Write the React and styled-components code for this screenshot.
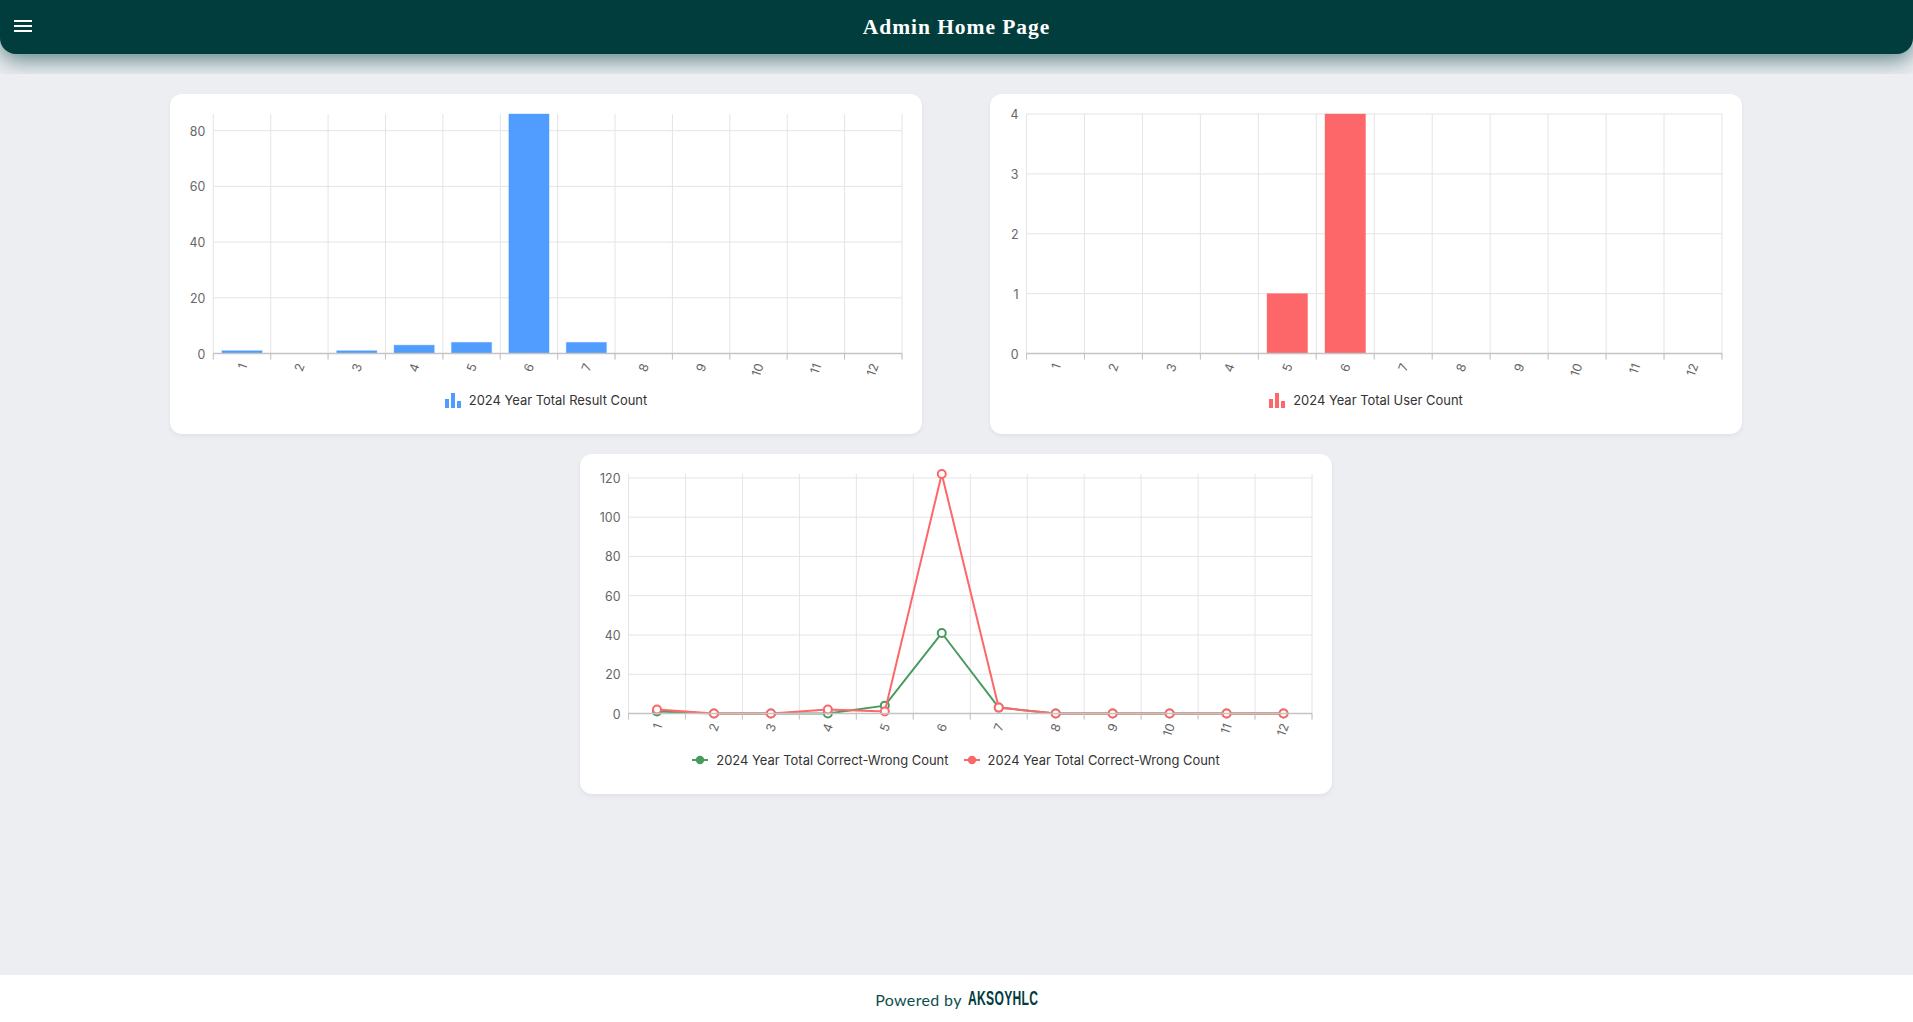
import React from "react";
import styled, { createGlobalStyle } from "styled-components";

const Global = createGlobalStyle`
  html, body { margin: 0; padding: 0; background: #eceef2; }
  #root { min-height: 100vh; }
`;

const Page = styled.div`
  min-height: 100vh;
  display: flex;
  flex-direction: column;
  background: #eceef2;
  font-family: Inter, "Liberation Sans", sans-serif;
`;
const TopClip = styled.div`
  height: 74px;
  overflow: hidden;
  flex: none;
`;
const TopBar = styled.header`
  height: 54px;
  display: grid;
  grid-template-columns: 1fr auto 1fr;
  align-items: center;
  padding: 0 10px;
  background: #013d3d;
  border-radius: 0 0 16px 16px;
  box-shadow: 0 6px 22px rgba(1, 61, 61, 0.6);
`;
const MenuButton = styled.button`
  width: 24px;
  height: 24px;
  padding: 0;
  margin: -3px 0 0 1px;
  border: 0;
  background: none;
  color: #fff;
  display: block;
`;
const Title = styled.h1`
  margin: 1px 0 0;
  color: #fff;
  font: 700 21.5px "Liberation Serif", serif;
  letter-spacing: 0.95px;
`;
const Main = styled.main`
  flex: 1;
  display: flex;
  flex-wrap: wrap;
  justify-content: center;
  align-content: flex-start;
  gap: 20px 68px;
  padding: 20px 1px 20px 0;
`;
const Card = styled.section`
  width: 752px;
  height: 340px;
  box-sizing: border-box;
  padding: 20px;
  background: #fff;
  border-radius: 12px;
  box-shadow: 0 2px 4px rgba(30, 40, 60, 0.06);
`;
const Plot = styled.svg`
  display: block;
  width: 712px;
  height: 271px;
  overflow: visible;
`;
const TickText = styled.text`
  font: 12.4px Inter, "Liberation Sans", sans-serif;
  fill: #666;
`;
const Legend = styled.div`
  height: 30px;
  display: flex;
  justify-content: center;
  align-items: center;
  gap: 15px;
  font-size: 12.95px;
  color: #333;
`;
const LegendItem = styled.span`
  display: inline-flex;
  align-items: center;
  gap: 8px;
  white-space: nowrap;
`;
const Footer = styled.footer`
  flex: none;
  height: 47px;
  background: #fff;
  display: flex;
  justify-content: center;
  align-items: center;
  gap: 6px;
  color: #0d4f4d;
`;
const Powered = styled.span`
  font: 400 16px Lato, "Open Sans", sans-serif;
  letter-spacing: 0.35px;
  margin-top: 1px;
`;
const Brand = styled.span`
  display: inline-block;
  width: 70px;
  white-space: nowrap;
  font: 700 19.5px "Liberation Sans", sans-serif;
  letter-spacing: 0.5px;
  color: #013d3d;
  transform: scaleX(0.62);
  transform-origin: left center;
  margin-top: -1px;
`;

const BLUE = "#519cff";
const RED = "#fe6769";
const GREEN = "#4a9a60";
const MONTHS = [1, 2, 3, 4, 5, 6, 7, 8, 9, 10, 11, 12];

function Axes({ left, right, max, ticks, children }) {
  const base = 239.5;
  const y = (v) => base - (v / max) * 239.5;
  const step = (right - left) / 12;
  return (
    <Plot viewBox="0 0 712 271">
      {ticks.map((t) => (
        <g key={t}>
          {t > 0 && <line x1={left} x2={right} y1={y(t)} y2={y(t)} stroke="#e4e4e4" strokeWidth="1" />}
          <TickText x={left - 8} y={y(t) + 5} textAnchor="end">{t}</TickText>
        </g>
      ))}
      {Array.from({ length: 13 }, (_, i) => (
        <line key={i} x1={left + i * step} x2={left + i * step} y1="0" y2={base + 6} stroke="#e4e4e4" strokeWidth="1" />
      ))}
      {children(y, step, base)}
      <line x1={left} x2={right} y1={base} y2={base} stroke="#c4c4c4" strokeWidth="1.4" />
      {Array.from({ length: 13 }, (_, i) => (
        <line key={i} x1={left + i * step} x2={left + i * step} y1={base} y2={base + 6} stroke="#c4c4c4" strokeWidth="1" />
      ))}
      {MONTHS.map((m, i) => {
        const cx = left + (i + 0.5) * step + 5.5;
        const cy = base + 12;
        return (
          <TickText key={m} x={cx} y={cy} textAnchor="end" transform={`rotate(-70 ${cx} ${cy})`}>
            {m}
          </TickText>
        );
      })}
    </Plot>
  );
}

function BarChart({ left, right, max, ticks, data, color }) {
  return (
    <Axes left={left} right={right} max={max} ticks={ticks}>
      {(y, step, base) =>
        data.map((v, i) =>
          v > 0 ? (
            <rect
              key={i}
              x={left + i * step + step * 0.15}
              y={y(v)}
              width={step * 0.7}
              height={base - y(v)}
              fill={color}
              stroke={color}
              strokeOpacity="0.35"
              strokeWidth="1"
            />
          ) : null
        )
      }
    </Axes>
  );
}

function LineChart({ left, right, max, ticks, series }) {
  return (
    <Axes left={left} right={right} max={max} ticks={ticks}>
      {(y, step) =>
        series.map((s) => {
          const pts = s.data.map((v, i) => [left + (i + 0.5) * step, y(v)]);
          return (
            <g key={s.color}>
              <polyline points={pts.map((p) => p.join(",")).join(" ")} fill="none" stroke={s.color} strokeWidth="2" />
              {pts.map((p, i) => (
                <circle key={i} cx={p[0]} cy={p[1]} r="4" fill="#fff" stroke={s.color} strokeWidth="2" />
              ))}
            </g>
          );
        })
      }
    </Axes>
  );
}

const BarKey = ({ color }) => (
  <svg width="16" height="15" viewBox="0 0 16 15" fill={color}>
    <rect x="0" y="6" width="4" height="9" />
    <rect x="6" y="0" width="4" height="15" />
    <rect x="12" y="8" width="4" height="7" />
  </svg>
);
const LineKey = ({ color }) => (
  <svg width="16" height="10" viewBox="0 0 16 10">
    <line x1="0" x2="16" y1="5" y2="5" stroke={color} strokeWidth="2" />
    <circle cx="8" cy="5" r="4.2" fill={color} />
  </svg>
);

export default function App() {
  return (
    <Page>
      <Global />
      <TopClip>
        <TopBar>
          <MenuButton aria-label="menu">
            <svg width="24" height="24" viewBox="0 0 24 24" fill="currentColor">
              <path d="M3 18h18v-2H3zm0-5h18v-2H3zm0-7v2h18V6z" />
            </svg>
          </MenuButton>
          <Title>Admin Home Page</Title>
        </TopBar>
      </TopClip>
      <Main>
        <Card>
          <BarChart left={23.3} right={712} max={86} ticks={[0, 20, 40, 60, 80]} data={[1, 0, 1, 3, 4, 86, 4, 0, 0, 0, 0, 0]} color={BLUE} />
          <Legend>
            <LegendItem><BarKey color={BLUE} />2024 Year Total Result Count</LegendItem>
          </Legend>
        </Card>
        <Card>
          <BarChart left={16.5} right={712} max={4} ticks={[0, 1, 2, 3, 4]} data={[0, 0, 0, 0, 1, 4, 0, 0, 0, 0, 0, 0]} color={RED} />
          <Legend>
            <LegendItem><BarKey color={RED} />2024 Year Total User Count</LegendItem>
          </Legend>
        </Card>
        <Card>
          <LineChart
            left={28.5}
            right={712}
            max={122}
            ticks={[0, 20, 40, 60, 80, 100, 120]}
            series={[
              { color: GREEN, data: [1, 0, 0, 0, 4, 41, 3, 0, 0, 0, 0, 0] },
              { color: RED, data: [2, 0, 0, 2, 1, 122, 3, 0, 0, 0, 0, 0] },
            ]}
          />
          <Legend>
            <LegendItem><LineKey color={GREEN} />2024 Year Total Correct-Wrong Count</LegendItem>
            <LegendItem><LineKey color={RED} />2024 Year Total Correct-Wrong Count</LegendItem>
          </Legend>
        </Card>
      </Main>
      <Footer>
        <Powered>Powered by</Powered>
        <Brand>AKSOYHLC</Brand>
      </Footer>
    </Page>
  );
}
